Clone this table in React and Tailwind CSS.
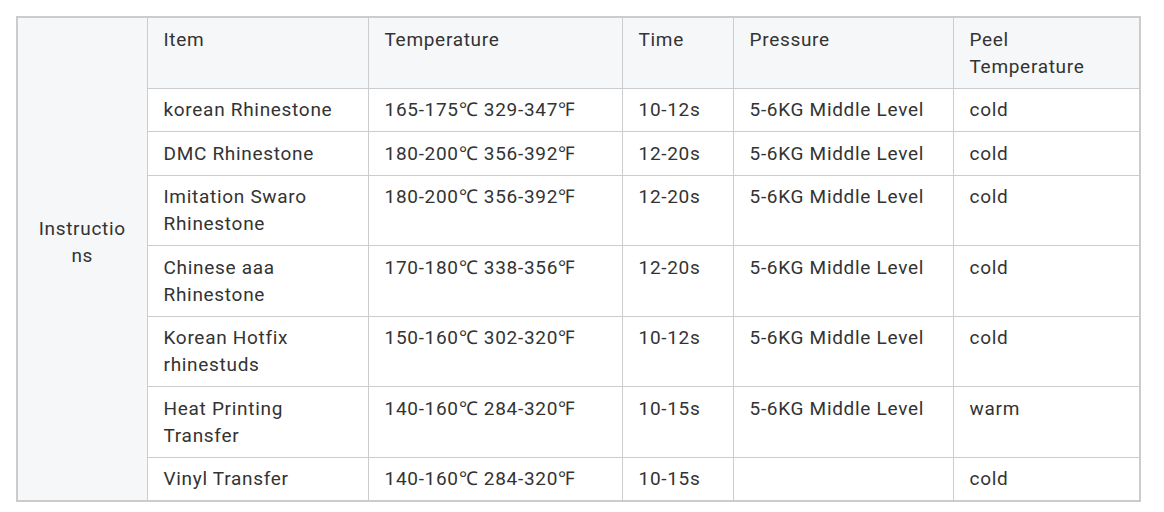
export default function App() {
  const rows = [
    ["korean Rhinestone", "165-175℃ 329-347℉", "10-12s", "5-6KG Middle Level", "cold"],
    ["DMC Rhinestone", "180-200℃ 356-392℉", "12-20s", "5-6KG Middle Level", "cold"],
    ["Imitation Swaro Rhinestone", "180-200℃ 356-392℉", "12-20s", "5-6KG Middle Level", "cold"],
    ["Chinese aaa Rhinestone", "170-180℃ 338-356℉", "12-20s", "5-6KG Middle Level", "cold"],
    ["Korean Hotfix rhinestuds", "150-160℃ 302-320℉", "10-12s", "5-6KG Middle Level", "cold"],
    ["Heat Printing Transfer", "140-160℃ 284-320℉", "10-15s", "5-6KG Middle Level", "warm"],
    ["Vinyl Transfer", "140-160℃ 284-320℉", "10-15s", "", "cold"],
  ];
  const cell = "border border-[#cccccc] px-4 py-[7.75px] align-top text-left font-normal";
  return (
    <div className="bg-white w-[1164px] h-[512px] pt-4 pl-4" style={{ fontFamily: "Roboto, 'Liberation Sans', sans-serif" }}>
      <table className="table-fixed border-collapse border-2 border-[#cccccc] w-[1124px] text-[19px] leading-[27px] tracking-[0.7px] text-[#333333]">
        <colgroup>
          <col className="w-[130px]" />
          <col className="w-[221px]" />
          <col className="w-[254px]" />
          <col className="w-[111px]" />
          <col className="w-[220px]" />
          <col className="w-[187px]" />
        </colgroup>
        <tbody>
          <tr className="bg-[#f6f7f9]">
            <td rowSpan={8} className="border border-[#cccccc] px-4 pt-2 pb-[42px] align-middle text-center bg-[#f6f7f9] break-all">
              Instructions
            </td>
            <td className={cell}>Item</td>
            <td className={cell}>Temperature</td>
            <td className={cell}>Time</td>
            <td className={cell}>Pressure</td>
            <td className={cell}>Peel Temperature</td>
          </tr>
          {rows.map((r, i) => (
            <tr key={i} className="bg-white">
              {r.map((c, j) => (
                <td key={j} className={cell}>{c}</td>
              ))}
            </tr>
          ))}
        </tbody>
      </table>
    </div>
  );
}
